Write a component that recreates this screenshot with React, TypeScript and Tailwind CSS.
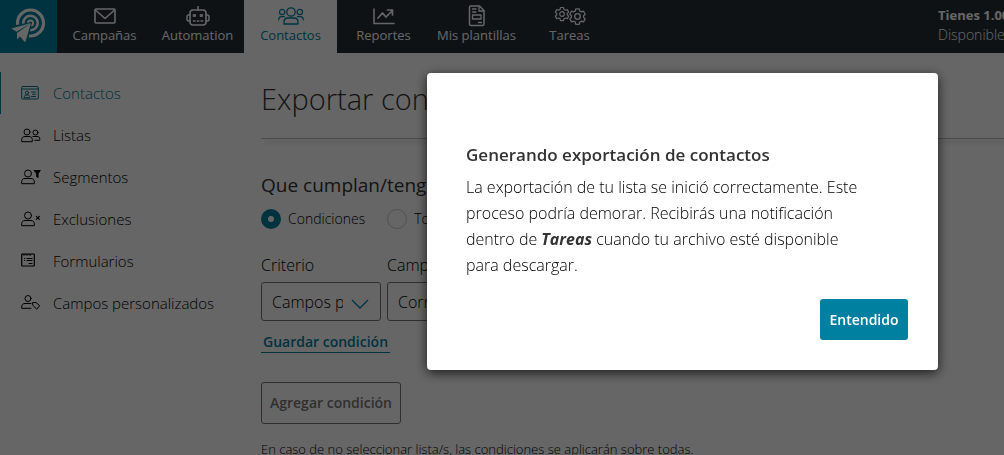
import type { ReactNode } from "react";

function Svg({ w, h, children }: { w: number; h: number; children: ReactNode }) {
    return (
        <svg
            width={w}
            height={h}
            viewBox={`0 0 ${w} ${h}`}
            fill="none"
            stroke="currentColor"
            strokeLinecap="round"
            strokeLinejoin="round"
            aria-hidden="true"
        >
            {children}
        </svg>
    );
}

function Logo() {
    return (
        <svg width="36" height="37" viewBox="0 0 36 37" fill="none" aria-hidden="true">
            <circle cx="19.5" cy="15" r="13" stroke="#fff" strokeWidth="3.2" />
            <circle cx="19.5" cy="15" r="7.2" stroke="#fff" strokeWidth="2.6" />
            <circle cx="19.5" cy="15" r="2.6" stroke="#fff" strokeWidth="2" />
            <path d="M21 14 0 18v7l10 12h6z" fill="#0080a0" />
            <path d="M20 15 .5 20.500l5 3.200zM20 15 6 25v6.500l3.200-3.200zM20 15 9 28.500l5.200 6z" fill="#fff" />
        </svg>
    );
}

const navItems = [
    {
        label: "Campañas",
        icon: (
            <Svg w={22} h={20}>
                <rect x="1" y="3" width="20" height="14" rx="1" strokeWidth="1.6" />
                <path d="m2 4.500 9 8 9-8" strokeWidth="1.6" />
            </Svg>
        ),
    },
    {
        label: "Automation",
        icon: (
            <Svg w={24} h={20}>
                <rect x="4" y="4" width="16" height="15" rx="3" strokeWidth="1.6" />
                <path d="M12 0v4M4 9H2.500C1.500 9 1 10 1 11v2c0 1 .5 2 1.500 2H4M20 9h1.500c1 0 1.500 1 1.500 2v2c0 1-.5 2-1.500 2H20" strokeWidth="1.500" />
                <rect x="7.500" y="8.500" width="2" height="2" fill="currentColor" strokeWidth=".8" />
                <rect x="14.500" y="8.500" width="2" height="2" fill="currentColor" strokeWidth=".8" />
                <path d="M7.500 15h1.500M11.300 15h1.500M15 15h1.500" strokeWidth="1.500" />
            </Svg>
        ),
    },
    {
        label: "Contactos",
        active: true,
        icon: (
            <Svg w={26} h={20}>
                <circle cx="13" cy="6" r="4.200" strokeWidth="1.300" />
                <circle cx="4.200" cy="6" r="2.700" strokeWidth="1.200" />
                <circle cx="21.800" cy="6" r="2.700" strokeWidth="1.200" />
                <path d="M6 18v-2c0-3 1.500-4 4-4h6c2.500 0 4 1 4 4v2z" strokeWidth="1.300" />
                <path d="M.7 14c0-2.500 1-3.300 3-3.300h2.800M25.300 14c0-2.500-1-3.300-3-3.300h-2.800" strokeWidth="1.200" />
            </Svg>
        ),
    },
    {
        label: "Reportes",
        icon: (
            <Svg w={22} h={20}>
                <path d="M1 3v14.500h20" strokeWidth="1.500" />
                <path d="m5 12 4.500-5 3.500 4 6-6M14.500 4H19.500v5" strokeWidth="1.700" />
            </Svg>
        ),
    },
    {
        label: "Mis plantillas",
        icon: (
            <Svg w={18} h={22}>
                <path d="M3 1h8.500L16 5.500V19c0 1-.5 1.500-1.500 1.500H3c-1 0-1.500-.5-1.500-1.500V2.500C1.500 1.500 2 1 3 1z" strokeWidth="1.500" />
                <path d="M11 1.500V6h4.500M4.500 4h3.500M4.500 7h3.500M10.500 17.500h3" strokeWidth="1.300" />
                <rect x="4.500" y="10" width="8.500" height="4" strokeWidth="1.300" />
            </Svg>
        ),
    },
    {
        label: "Tareas",
        icon: (
            <Svg w={32} h={20}>
                <circle cx="8" cy="8" r="2.300" strokeWidth="1.200" />
                <path d="M6.500 1.500h3l.5 2 1.300.7 2-.6 1.400 2.500-1.500 1.400v1.300l1.500 1.300-1.400 2.500-2-.6-1.300.7-.5 2h-3l-.5-2-1.300-.7-2 .6-1.400-2.500 1.500-1.300V7.500L1.300 6.100l1.400-2.500 2 .6L6 3.500z" strokeWidth="1.200" />
                <circle cx="23.500" cy="10.500" r="2.800" strokeWidth="1.300" />
                <path d="M21.800 2.800h3.400l.6 2.200 1.500.9 2.200-.7 1.700 3-1.600 1.500v1.700l1.600 1.500-1.700 3-2.200-.7-1.500.9-.6 2.200h-3.400l-.6-2.200-1.500-.9-2.200.7-1.700-3 1.600-1.500V9.700l-1.600-1.500 1.700-3 2.200.7 1.500-.9z" strokeWidth="1.300" />
            </Svg>
        ),
    },
];

function Person() {
    return (
        <>
            <circle cx="7" cy="4.500" r="3.500" />
            <path d="M.7 14.300v-1.500C.7 10.500 2 9.500 4 9.500h6c2 0 3.300 1 3.300 3.300v1.500z" />
        </>
    );
}

const sideItems = [
    {
        label: "Contactos",
        active: true,
        icon: (
            <Svg w={20} h={16}>
                <rect x=".7" y="1.500" width="16.600" height="12.500" rx=".8" />
                <path d="M1 4h16M10.500 7h4M11.500 9.200h3M10.500 11.500h4" />
                <circle cx="6" cy="7.700" r="1.600" />
                <path d="M3.200 12.300c0-1.600.8-2.200 2-2.200h1.600c1.200 0 2 .6 2 2.200z" />
            </Svg>
        ),
    },
    {
        label: "Listas",
        icon: (
            <Svg w={20} h={16}>
                <path d="M.7 14.300v-1.500C.7 10.500 2 9.500 4 9.500h4c2 0 3.300 1 3.300 3.300v1.500z" />
                <circle cx="6" cy="5" r="3" />
                <circle cx="14.500" cy="5.500" r="2.500" />
                <path d="M12 9.500h4c2 0 2.800.8 2.800 3v.8h-5" />
            </Svg>
        ),
    },
    {
        label: "Segmentos",
        icon: (
            <Svg w={20} h={16}>
                <Person />
                <path d="M13.300 1.500h6l-2.200 3v4l-1.500-1v-3z" fill="currentColor" />
            </Svg>
        ),
    },
    {
        label: "Exclusiones",
        icon: (
            <Svg w={20} h={16}>
                <Person />
                <path d="m15.300 5.300 3 3m0-3-3 3" strokeWidth="1.200" />
            </Svg>
        ),
    },
    {
        label: "Formularios",
        icon: (
            <Svg w={20} h={16}>
                <rect x=".7" y="1" width="12.600" height="12" rx=".5" strokeWidth="1.200" />
                <path d="m2 1.300 1 1.200 1-1.200M5 1.300l1 1.200 1-1.200M8 1.300l1 1.200 1-1.200" />
                <path d="M3.500 5.500h.3M6 5.500h5M3.500 7.500h.3M6 7.500h5M8 10.500h3" strokeWidth="1.200" />
            </Svg>
        ),
    },
    {
        label: "Campos personalizados",
        icon: (
            <Svg w={20} h={16}>
                <circle cx="7" cy="3.500" r="3" />
                <path d="M10 13.300H.7v-1.500C.7 9.500 2 8.500 4 8.500h6" />
                <path d="M12 7.500h3l3.700 3.200-2.900 3.500L12 10.500z" />
            </Svg>
        ),
    },
];

function TopBar() {
    return (
        <header className="flex h-[53px] shrink-0 bg-[#252f36] text-white">
            <a href="#inicio" aria-label="Inicio" className="flex w-[57px] shrink-0 items-center justify-center bg-[#0080a0]">
                <Logo />
            </a>
            <nav className="flex pl-px">
                {navItems.map((item) => (
                    <a
                        key={item.label}
                        href="#"
                        className={
                            item.active
                                ? "flex w-[93px] flex-col items-center bg-white pt-1.5 text-[13px] leading-[18px] text-[#0080a0]"
                                : "flex w-[93px] flex-col items-center pt-1.5 text-[13px] leading-[18px] text-white"
                        }
                    >
                        <span className="flex h-5 items-center">{item.icon}</span>
                        <span className="whitespace-nowrap">{item.label}</span>
                    </a>
                ))}
            </nav>
            <div className="ml-auto w-[66px] overflow-hidden whitespace-nowrap pt-1.5">
                <p className="text-[13px] font-bold leading-[18px]">Tienes 1.00</p>
                <p className="text-sm font-light leading-[22px]">Disponible</p>
            </div>
        </header>
    );
}

function SideBar() {
    return (
        <aside className="w-60 shrink-0 pt-[19px]">
            <ul>
                {sideItems.map((item) => (
                    <li key={item.label}>
                        <a
                            href="#"
                            className={
                                item.active
                                    ? "flex h-[42px] items-center gap-3 border-l border-[#0080a0] pl-5 text-[15px] font-light text-[#007090]"
                                    : "flex h-[42px] items-center gap-3 border-l border-transparent pl-5 text-[15px] font-light text-black"
                            }
                        >
                            {item.icon}
                            {item.label}
                        </a>
                    </li>
                ))}
            </ul>
        </aside>
    );
}

function SelectField({ id, label, value }: { id: string; label: string; value: string }) {
    return (
        <div className="w-[120px]">
            <label htmlFor={id} className="block text-base font-light leading-6">
                {label}
            </label>
            <div className="relative mt-[5px]">
                <select
                    id={id}
                    className="h-[39px] w-full appearance-none rounded-[3px] border border-[#777] bg-white pl-2.5 pr-[37px] text-base font-light text-black"
                >
                    <option>{value}</option>
                </select>
                <svg
                    className="pointer-events-none absolute right-3 top-4 text-[#0080a0]"
                    width="18"
                    height="12"
                    viewBox="0 0 18 12"
                    fill="none"
                    stroke="currentColor"
                    strokeWidth="1.300"
                    aria-hidden="true"
                >
                    <path d="m1 2 8 8 8-8" />
                </svg>
            </div>
        </div>
    );
}

function ExportForm() {
    return (
        <main className="min-w-0 flex-1 whitespace-nowrap pl-[21px] pt-[25px] text-black">
            <h1 className="text-[29px] font-light leading-[42px] text-[#333]">Exportar contactos</h1>
            <hr className="mt-[18px] border-[#bbb] shadow-[4px_3px_4px_#0004]" />

            <h2 className="mt-8 text-[19px] leading-7 text-[#333]">Que cumplan/tengan</h2>
            <div className="mt-2.5 flex items-center gap-[22px] text-sm font-light">
                <label className="flex items-center gap-[7px]">
                    <input
                        type="radio"
                        name="scope"
                        defaultChecked
                        className="size-5 appearance-none rounded-full border border-[#ccc] checked:border-[7px] checked:border-[#0080a0]"
                    />
                    Condiciones
                </label>
                <label className="flex items-center gap-[7px]">
                    <input
                        type="radio"
                        name="scope"
                        className="size-5 appearance-none rounded-full border border-[#ccc] checked:border-[7px] checked:border-[#0080a0]"
                    />
                    Todos
                </label>
            </div>

            <div className="mt-6 flex gap-1.5">
                <SelectField id="criterio" label="Criterio" value="Campos personalizados" />
                <SelectField id="campo" label="Campo" value="Correo" />
            </div>

            <a
                href="#guardar"
                className="mt-2.5 inline-block border-b border-[#0080a0] px-0.5 text-sm font-semibold leading-[21px] text-[#0080a0]"
            >
                Guardar condición
            </a>
            <div className="mt-[29px]">
                <button
                    type="button"
                    className="h-[42px] w-[140px] rounded-[3px] border border-[#777] text-sm font-semibold text-[#777]"
                >
                    Agregar condición
                </button>
            </div>
            <p className="mt-4 text-[13px] font-light leading-[18px]">
                En caso de no seleccionar lista/s, las condiciones se aplicarán sobre todas.
            </p>
        </main>
    );
}

function ExportDialog() {
    return (
        <div className="fixed inset-0 flex items-start justify-end bg-black/60 pr-[66px] pt-[73px]">
            <div
                role="dialog"
                aria-modal="true"
                aria-labelledby="dialog-title"
                className="w-[511px] rounded-[4px] bg-white pb-[30px] pl-[39px] pr-[30px] pt-[69px] text-[#333] shadow-[0_3px_12px_#000b]"
            >
                <h2 id="dialog-title" className="text-[17px] font-semibold leading-[26px]">
                    Generando exportación de contactos
                </h2>
                <p className="mt-1.5 max-w-[410px] text-base font-light leading-[26px] text-black">
                    La exportación de tu lista se inició correctamente. Este
                    <br />
                    proceso podría demorar. Recibirás una notificación
                    <br />
                    dentro de <strong className="font-bold italic text-[#333]">Tareas</strong> cuando tu archivo esté disponible
                    <br />
                    para descargar.
                </p>
                <div className="mt-[21px] flex justify-end">
                    <button
                        type="button"
                        className="h-[41px] w-[88px] rounded-[3px] bg-[#0080a0] text-sm font-semibold text-white"
                    >
                        Entendido
                    </button>
                </div>
            </div>
        </div>
    );
}

export default function App() {
    return (
        <div className="flex h-screen flex-col overflow-hidden bg-white font-['Open_Sans','Noto_Sans',sans-serif]">
            <TopBar />
            <div className="flex">
                <SideBar />
                <ExportForm />
            </div>
            <ExportDialog />
        </div>
    );
}
